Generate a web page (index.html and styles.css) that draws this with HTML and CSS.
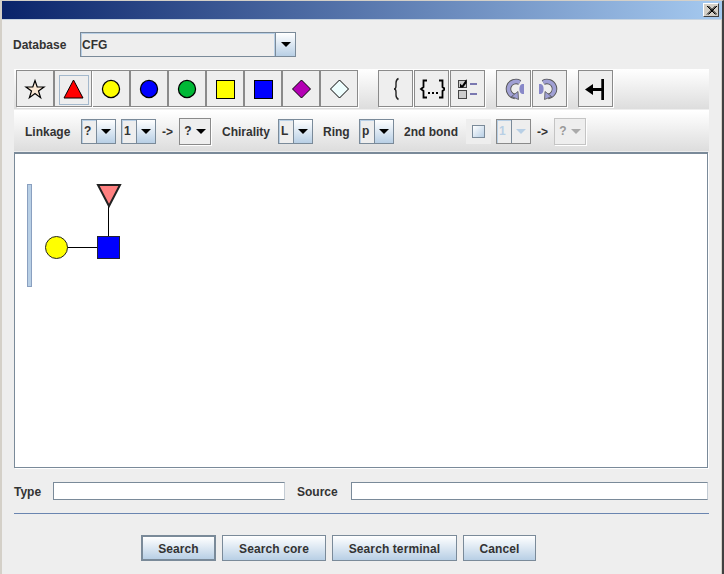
FILE: index.html
```html
<!DOCTYPE html>
<html lang="en">
<head>
<meta charset="utf-8">
<title>Search</title>
<link rel="stylesheet" href="styles.css">
</head>
<body>
<div class="window">
  <div class="titlebar">
    <div class="close"><svg width="11" height="9" viewBox="0 0 11 9"><path d="M1 0L9.500 8.500M2.500 0L11 8.500M9.500 0L1 8.500M11 0L2.500 8.500" stroke="#000" stroke-width="1" fill="none"/></svg></div>
  </div>
  <div class="content">
    <div class="db-row">
      <span class="label db-label">Database</span>
      <div class="combo combo-db"><div class="field">CFG</div><div class="arrow"><i class="tri"></i></div></div>
    </div>

    <div class="toolbar">
      <div class="tool"><svg width="22" height="22" viewBox="0 0 22 22"><path d="M11 2.500L13.200 9H20L14.500 13L16.600 19.700L11 15.600L5.400 19.700L7.500 13L2 9H8.800Z" fill="#fbe8d4" stroke="#000" stroke-width="1.200"/></svg></div>
      <div class="tool selected"><svg width="22" height="20" viewBox="0 0 22 20"><path d="M11.500 1L2 19H21Z" fill="#f00" stroke="#000"/></svg></div>
      <div class="tool"><svg width="20" height="20" viewBox="0 0 21 21"><circle cx="10.500" cy="10.500" r="9" fill="#ff0" stroke="#000" stroke-width="1.300"/></svg></div>
      <div class="tool"><svg width="20" height="20" viewBox="0 0 21 21"><circle cx="10.500" cy="10.500" r="9" fill="#00f" stroke="#000" stroke-width="1.300"/></svg></div>
      <div class="tool"><svg width="20" height="20" viewBox="0 0 21 21"><circle cx="10.500" cy="10.500" r="9" fill="#00b836" stroke="#000" stroke-width="1.300"/></svg></div>
      <div class="tool"><svg width="20" height="20" viewBox="0 0 20 20"><rect x="1.500" y="1.500" width="18" height="18" fill="#ff0" stroke="#000"/></svg></div>
      <div class="tool"><svg width="20" height="20" viewBox="0 0 20 20"><rect x="1.500" y="1.500" width="18" height="18" fill="#00f" stroke="#000"/></svg></div>
      <div class="tool"><svg width="20" height="20" viewBox="0 0 20 20"><path d="M10.500 1L19.500 10L10.500 19L1.500 10Z" fill="#b400b4" stroke="#000"/></svg></div>
      <div class="tool"><svg width="20" height="20" viewBox="0 0 20 20"><path d="M10.500 1L19.500 10L10.500 19L1.500 10Z" fill="#eefefe" stroke="#000"/></svg></div>

      <div class="tool narrow first-group"><svg width="12" height="24" viewBox="-0.500 0 12 24"><path d="M8 1.500C6 2.500 5.500 3.500 5.500 6V9C5.500 11 5 12 3.500 12C5 12 5.500 13 5.500 15V18C5.500 20.500 6 21.500 8 22.500" fill="none" stroke="#222" stroke-width="1.400"/></svg></div>
      <div class="tool narrow"><svg width="26" height="20" viewBox="-1 0 26 20"><path d="M7 1.500H3.500V8L1 10L3.500 12V18.500H7M19 1.500H22.500V8L25 10L22.500 12V18.500H19" fill="none" stroke="#000" stroke-width="1.800"/><path d="M8 13h2v2H8zM12 13h2v2h-2zM16 13h2v2h-2z" fill="#000"/></svg></div>
      <div class="tool narrow"><svg width="23" height="22" viewBox="0 0 23 22"><rect x="2.500" y="2.500" width="8" height="7" fill="#ccc" stroke="#444"/><path d="M4 5.500L6 7.500L10.500 1V5L7 9.500H4Z" fill="#000"/><rect x="2.500" y="12.500" width="8" height="8" fill="#ccc" stroke="#444"/><path d="M14 6H21M14 16H21" stroke="#7a78b0" stroke-width="2"/></svg></div>

      <div class="tool narrow second-group"><svg width="21" height="22" viewBox="0 0 21 22"><path d="M16.800 4.500A7.500 7.500 0 1 0 12 18.400" fill="none" stroke="#555" stroke-width="5.500"/><path d="M16.800 4.500A7.500 7.500 0 1 0 12 18.400" fill="none" stroke="#a0a0d4" stroke-width="3.700"/><path d="M15 13.500L8.500 18.500L15.500 21.500Z" fill="#a0a0d4" stroke="#555" stroke-width=".8"/><path d="M21 6H19C15.500 7 15.500 15 19 16H21Z" fill="#8888c8"/></svg></div>
      <div class="tool narrow"><svg class="mirror" width="21" height="22" viewBox="0 0 21 22"><path d="M16.800 4.500A7.500 7.500 0 1 0 12 18.400" fill="none" stroke="#555" stroke-width="5.500"/><path d="M16.800 4.500A7.500 7.500 0 1 0 12 18.400" fill="none" stroke="#a0a0d4" stroke-width="3.700"/><path d="M15 13.500L8.500 18.500L15.500 21.500Z" fill="#a0a0d4" stroke="#555" stroke-width=".8"/><path d="M21 6H19C15.500 7 15.500 15 19 16H21Z" fill="#8888c8"/></svg></div>

      <div class="tool narrow third-group"><svg class="exit" width="20" height="20" viewBox="0 0 20 20"><path d="M19 0V21H16.300V12H8V16L0 10.500L8 5V9H16.300V0Z" fill="#000"/></svg></div>
    </div>

    <div class="linkbar">
      <span class="label l-linkage">Linkage</span>
      <div class="combo small"><div class="field">?</div><div class="arrow"><i class="tri"></i></div></div>
      <div class="combo small m5"><div class="field">1</div><div class="arrow"><i class="tri"></i></div></div>
      <span class="label arrow-text">-&gt;</span>
      <div class="plain"><span>?</span><i class="tri"></i></div>
      <span class="label l-chirality">Chirality</span>
      <div class="combo small m10"><div class="field">L</div><div class="arrow"><i class="tri"></i></div></div>
      <span class="label l-ring">Ring</span>
      <div class="combo small m11"><div class="field">p</div><div class="arrow"><i class="tri"></i></div></div>
      <span class="label l-bond">2nd bond</span>
      <div class="check-wrap"><div class="check"></div></div>
      <div class="combo small disabled m5"><div class="field">1</div><div class="arrow"><i class="tri"></i></div></div>
      <span class="label arrow-text">-&gt;</span>
      <div class="plain disabled"><span>?</span><i class="tri"></i></div>
    </div>

    <div class="canvas">
      <svg width="120" height="150" viewBox="0 0 120 150">
        <rect x="12.500" y="30.500" width="4" height="102" fill="#b8cfe5" stroke="#8aa0c0"/>
        <path d="M52 93.500H83M93.500 83V52" stroke="#000" stroke-width="1"/>
        <circle cx="41.500" cy="93.500" r="11" fill="#ff0" stroke="#222"/>
        <rect x="82.500" y="82.500" width="22" height="22" fill="#00f" stroke="#223"/>
        <path d="M83 31H105L94 52Z" fill="#ff8080" stroke="#222" stroke-width="2"/>
      </svg>
    </div>

    <div class="form-row">
      <span class="label l-type">Type</span>
      <div class="input input-type"></div>
      <span class="label l-source">Source</span>
      <div class="input input-source"></div>
    </div>

    <div class="rule"></div>

    <div class="actions">
      <div class="btn default">Search</div>
      <div class="btn core">Search core</div>
      <div class="btn terminal">Search terminal</div>
      <div class="btn cancel">Cancel</div>
    </div>
  </div>
</div>
</body>
</html>
```

FILE: styles.css
```css
* { box-sizing: border-box; }
html, body { margin: 0; padding: 0; }
body {
  width: 724px;
  height: 574px;
  overflow: hidden;
  background: #eeeeee;
  font: bold 12px "Liberation Sans", Arial, sans-serif;
  color: #333333;
}
.window {
  width: 724px;
  height: 574px;
  background: #eeeeee;
  border-top: 1px solid #d4d0c8;
  border-left: 2px solid #d4d0c8;
  border-right: 2px solid #404040;
  display: flex;
  flex-direction: column;
}
.titlebar {
  height: 19px;
  flex: none;
  background: linear-gradient(90deg, #0a246a, #a6caf0);
  display: flex;
  justify-content: flex-end;
  align-items: center;
  padding-right: 3px;
  border-bottom: 1px solid #c8d4e0;
}
.close {
  width: 16px;
  height: 14px;
  background: #d4d0c8;
  border: 1px solid;
  border-color: #fff #404040 #404040 #fff;
  display: flex;
  align-items: center;
  justify-content: center;
}
.content {
  flex: 1;
  padding-left: 12px;
  display: flex;
  flex-direction: column;
  box-shadow: inset -1px 0 0 #d4d0c8;
}
.label { white-space: nowrap; }

.db-row { display: flex; align-items: center; margin-top: 12px; height: 25px; }
.db-label { margin-left: -1px; width: 67px; }

.combo { display: flex; height: 25px; border: 1px solid #7a8a99; background: #eeeeee; }
.combo-db { width: 216px; height: 25px; }
.combo-db .field { flex: 1; padding-left: 1px; border-right: 1px solid #7a8a99; box-shadow: inset -1px 0 0 #b8cfe5, inset 1px 1px 0 #b8cfe5; }
.combo-db .arrow { width: 19px; }
.field { display: flex; align-items: center; }
.arrow {
  background: linear-gradient(#ffffff, #b8cfe5);
  display: flex;
  align-items: center;
  justify-content: center;
}
.tri { width: 0; height: 0; border: 5px solid transparent; border-top: 5px solid #000; border-bottom: 0; display: block; }

.toolbar {
  margin-top: 12px;
  height: 40px;
  width: 695px;
  flex: none;
  padding-top: 1px;
  padding-left: 2px;
  display: flex;
  align-items: flex-start;
  background: linear-gradient(#ffffff, #dddddd);
}
.tool {
  width: 38px;
  height: 37px;
  flex: none;
  background: #eeeeee;
  border: 1px solid #8a8a8a;
  box-shadow: 1px 1px 0 #fff;
  padding-top: 1px;
  display: flex;
  align-items: center;
  justify-content: center;
}
.tool.narrow { width: 35px; margin-right: 1px; }
.tool.selected { position: relative; }
.tool.selected::before {
  content: "";
  position: absolute;
  left: 4px;
  top: 4px;
  width: 28px;
  height: 28px;
  border: 1px solid #a3b8cc;
}
.tool.selected svg { position: relative; }
.first-group { margin-left: 20px; }
.second-group { margin-left: 10px; }
.third-group { margin-left: 10px; }
.mirror { transform: scaleX(-1); }
.exit { margin-right: 2px; overflow: visible; }

.linkbar {
  margin-top: 1px;
  height: 41px;
  width: 695px;
  flex: none;
  border-top: 1px solid #ffffff;
  display: flex;
  align-items: center;
  background: linear-gradient(#ffffff, #dddddd);
}
.linkbar .label { padding-top: 2px; }
.small { width: 35px; }
.small .field { width: 15px; flex: none; padding-left: 2px; border-right: 1px solid #7a8a99; background: #eeeeee; box-shadow: inset 1px 1px 0 #b8cfe5; }
.small .arrow { flex: 1; }
.m5 { margin-left: 5px; }
.m10 { margin-left: 10px; }
.m11 { margin-left: 11px; }
.l-linkage { margin-left: 11px; width: 56px; }
.arrow-text { margin-left: 6px; width: 17px; }
.plain {
  width: 32px;
  height: 27px;
  border: 1px solid #8a8a8a;
  box-shadow: 1px 1px 0 #fff;
  background: #eeeeee;
  display: flex;
  align-items: center;
  justify-content: center;
  gap: 4px;
}
.l-chirality { margin-left: 11px; width: 46px; }
.l-ring { margin-left: 10px; width: 25px; }
.l-bond { margin-left: 10px; width: 52px; }
.check-wrap {
  width: 25px;
  height: 25px;
  margin-left: 10px;
  background: #eeeeee;
  display: flex;
  align-items: center;
  justify-content: center;
}
.check { width: 13px; height: 13px; border: 1px solid #7a8a99; background: linear-gradient(135deg, #ffffff, #b8cfe5); }
.disabled { color: #b8cfe5; border-color: #8a8a8a; }
.disabled .tri { border-top-color: #b8cfe5; }
.plain.disabled { color: #999999; border-color: #c4c4c4; }
.plain.disabled .tri { border-top-color: #aaaaaa; }
.small.disabled .arrow { background: #eeeeee; }

.canvas {
  margin-top: 1px;
  width: 694px;
  height: 316px;
  flex: none;
  background: #ffffff;
  border: 1px solid #7a8a99;
  border-top-width: 2px;
  box-shadow: 1px 1px 0 #fff;
}
.canvas svg { display: block; }

.form-row { display: flex; align-items: center; height: 18px; margin-top: 14px; }
.form-row .label { padding-top: 2px; }
.l-type { width: 39px; }
.input { height: 18px; background: #fff; border: 1px solid #7a8a99; border-right-color: #c4ccd4; }
.input-type { width: 232px; }
.l-source { margin-left: 12px; width: 54px; }
.input-source { width: 357px; }

.rule { margin-top: 13px; width: 695px; height: 1px; background: #6a85b0; flex: none; }

.actions { display: flex; margin-top: 21px; margin-left: 127px; gap: 6px; }
.btn {
  height: 26px;
  padding-top: 1px;
  border: 1px solid #7a8a99;
  background: linear-gradient(#ffffff, #b8cfe5);
  letter-spacing: .1px;
  display: flex;
  align-items: center;
  justify-content: center;
}
.btn.default { width: 75px; border-width: 2px; }
.btn.core { width: 104px; }
.btn.terminal { width: 125px; }
.btn.cancel { width: 73px; }
```
